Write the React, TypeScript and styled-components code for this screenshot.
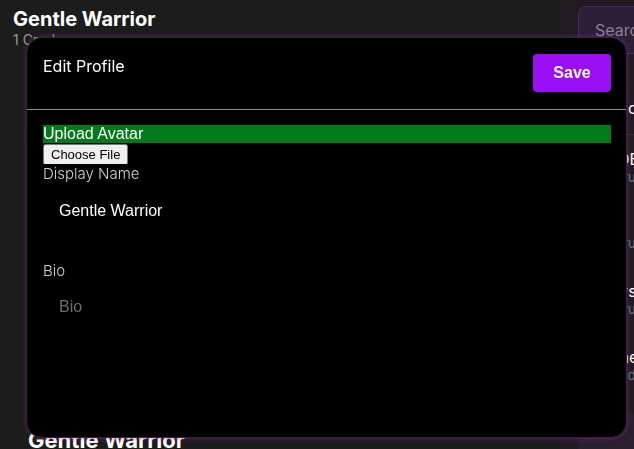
import React from "react";
import styled, { createGlobalStyle } from "styled-components";

const GlobalStyle = createGlobalStyle`
  html, body { margin: 0; padding: 0; background: #1c1c1c; }
  body { font-family: Inter, "Noto Sans", sans-serif; color: #fff; overflow: hidden; }
  * { box-sizing: border-box; }
`;

const Page = styled.div`
  display: flex;
  height: 100vh;
  overflow: hidden;
`;

const Main = styled.main`
  flex: 1;
  display: flex;
  flex-direction: column;
  padding: 7px 13px 0;
  min-width: 0;
`;

const ProfileName = styled.h1`
  margin: 0;
  font-size: 20px;
  line-height: 24px;
  font-weight: 700;
  color: #fff;
`;

const ProfileMeta = styled.div`
  font-size: 14px;
  line-height: 17px;
  color: #9a9a9a;
`;

const PostCard = styled.div`
  margin-top: 379px;
  padding: 0 15px;
`;

const PostTitle = styled.h2`
  margin: 0;
  font-size: 22px;
  line-height: 26px;
  font-weight: 700;
  color: #fff;
`;

const Sidebar = styled.aside`
  width: 72px;
  flex-shrink: 0;
  background: #211c24;
  overflow: hidden;
  padding: 6px 0 0 16px;
`;

const SideInner = styled.div`
  width: 280px;
  display: flex;
  flex-direction: column;
`;

const SearchBox = styled.div`
  height: 48px;
  border: 1px solid #4a2c5c;
  background: #2c1f38;
  border-radius: 8px;
  padding: 0 16px;
  display: flex;
  align-items: center;
  font-size: 16px;
  color: #8a8192;
`;

const SideSection = styled.div`
  margin-top: 44px;
  display: flex;
  flex-direction: column;
`;

const SideHeading = styled.div`
  font-size: 16px;
  line-height: 20px;
  color: #fff;
  padding-left: 16px;
  padding-bottom: 16px;
  border-bottom: 1px solid #3a3040;
`;

const SideItem = styled.div`
  padding: 14px 16px 12px;
  display: flex;
  flex-direction: column;
  height: 66px;
`;

const SideTitle = styled.div`
  font-size: 16px;
  line-height: 20px;
  color: #fff;
`;

const SideSub = styled.div`
  font-size: 13px;
  line-height: 16px;
  color: #777;
`;

const SideFooter = styled.div`
  margin-top: 14px;
  font-size: 16px;
  line-height: 20px;
  color: #fff;
  padding-left: 16px;
  background: #2a2030;
  height: 60px;
  padding-top: 35px;
`;

const Modal = styled.div`
  position: fixed;
  left: 26px;
  top: 37px;
  width: 601px;
  height: 401px;
  background: #000;
  border: 1px solid #3f1f40;
  border-radius: 16px;
  box-shadow: 0 0 5px rgba(150, 50, 150, 0.55);
  display: flex;
  flex-direction: column;
  overflow: hidden;
`;

const ModalHeader = styled.div`
  display: flex;
  justify-content: space-between;
  align-items: flex-start;
  padding: 16px 15px 17px 16px;
  border-bottom: 1px solid #8a8a8a;
`;

const ModalTitle = styled.h2`
  margin: 2px 0 0;
  font-size: 16px;
  line-height: 20px;
  font-weight: 400;
  color: #fff;
`;

const SaveButton = styled.button`
  width: 78px;
  height: 38px;
  border: none;
  border-radius: 4px;
  background: #9a0ff5;
  color: #fff;
  font-family: "Liberation Sans", Arial, sans-serif;
  font-weight: 700;
  font-size: 16px;
  cursor: pointer;
`;

const ModalBody = styled.div`
  padding: 15px 15px 16px 16px;
  display: flex;
  flex-direction: column;
`;

const AvatarLabel = styled.label`
  display: block;
  background: #007a1b;
  color: #fff;
  font-family: "Liberation Sans", Arial, sans-serif;
  font-size: 16px;
  line-height: 18px;
`;

const FileInput = styled.input`
  font-family: "Liberation Sans", Arial, sans-serif;
  font-size: 13px;
  color: #000;
  height: 20px;
  &::file-selector-button {
    font-family: "Liberation Sans", Arial, sans-serif;
    font-size: 13px;
    margin-right: 4px;
  }
`;

const FieldLabel = styled.label`
  display: block;
  font-size: 15px;
  line-height: 20px;
  font-weight: 300;
  color: #d0d0d0;
`;

const Field = styled.div<{ $gap: number }>`
  display: flex;
  flex-direction: column;
  margin-bottom: ${(p) => p.$gap}px;
`;

const TextInput = styled.input`
  background: transparent;
  border: none;
  outline: none;
  color: #fff;
  font-family: "Liberation Sans", Arial, sans-serif;
  font-size: 16px;
  line-height: 18px;
  padding: 18px 16px 16px;
  width: 100%;
`;

const TextArea = styled.textarea`
  background: transparent;
  border: none;
  outline: none;
  resize: none;
  color: #fff;
  font-family: "Liberation Sans", Arial, sans-serif;
  font-size: 16px;
  line-height: 18px;
  padding: 17px 16px 16px;
  width: 100%;
  height: 60px;
  &::placeholder { color: #6e6e6e; }
`;

const items = [
  { t: "CODE", s: "33 Cruds" },
  { t: "Fun", s: "33 Cruds" },
  { t: "News", s: "33 Cruds" },
  { t: "Games", s: "3 Cruds" },
];

export default function App() {
  return (
    <>
      <GlobalStyle />
      <Page>
        <Main>
          <ProfileName>Gentle Warrior</ProfileName>
          <ProfileMeta>1 Cruds</ProfileMeta>
          <PostCard>
            <PostTitle>Gentle Warrior</PostTitle>
          </PostCard>
        </Main>
        <Sidebar>
          <SideInner>
            <SearchBox>Search</SearchBox>
            <SideSection>
              <SideHeading>Trending</SideHeading>
              {items.map((it) => (
                <SideItem key={it.t}>
                  <SideTitle>{it.t}</SideTitle>
                  <SideSub>{it.s}</SideSub>
                </SideItem>
              ))}
            </SideSection>
            <SideFooter>Suggestions</SideFooter>
          </SideInner>
        </Sidebar>
      </Page>
      <Modal>
        <ModalHeader>
          <ModalTitle>Edit Profile</ModalTitle>
          <SaveButton>Save</SaveButton>
        </ModalHeader>
        <ModalBody>
          <Field $gap={0}>
            <AvatarLabel htmlFor="avatar">Upload Avatar</AvatarLabel>
            <div>
              <FileInput id="avatar" type="file" />
            </div>
          </Field>
          <Field $gap={25}>
            <FieldLabel htmlFor="name">Display Name</FieldLabel>
            <TextInput id="name" defaultValue="Gentle Warrior" />
          </Field>
          <Field $gap={0}>
            <FieldLabel htmlFor="bio">Bio</FieldLabel>
            <TextArea id="bio" placeholder="Bio" />
          </Field>
        </ModalBody>
      </Modal>
    </>
  );
}
